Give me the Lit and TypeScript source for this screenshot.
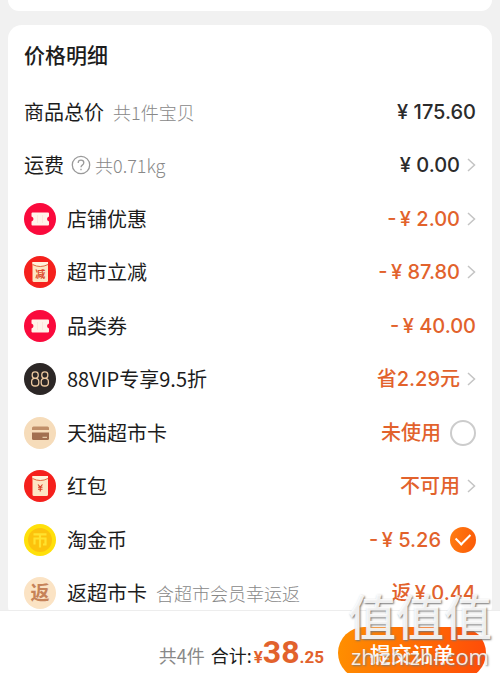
import { LitElement, html, css, svg, nothing } from "lit";
import { customElement, state } from "lit/decorators.js";
import { classMap } from "lit/directives/class-map.js";

interface Row {
  id: string;
  label: string;
  note?: string;
  help?: boolean;
  icon?: string;
  amount: string;
  dark?: boolean;
  action?: "link" | "check";
}

const rows: Row[] = [
  { id: "goods", label: "商品总价", note: "共1件宝贝", amount: "¥ 175.60", dark: true },
  { id: "freight", label: "运费", note: "共0.71kg", help: true, amount: "¥ 0.00", dark: true, action: "link" },
  { id: "shop", label: "店铺优惠", icon: "ticket", amount: "-\u2009¥ 2.00", action: "link" },
  { id: "market", label: "超市立减", icon: "reduce", amount: "-\u2009¥ 87.80", action: "link" },
  { id: "category", label: "品类券", icon: "ticket", amount: "-\u2009¥ 40.00" },
  { id: "vip", label: "88VIP专享9.5折", icon: "vip", amount: "省2.29元", action: "link" },
  { id: "card", label: "天猫超市卡", icon: "card", amount: "未使用", action: "check" },
  { id: "packet", label: "红包", icon: "packet", amount: "不可用", action: "link" },
  { id: "coin", label: "淘金币", icon: "coin", amount: "-\u2009¥ 5.26", action: "check" },
  { id: "back", label: "返超市卡", note: "含超市会员幸运返", icon: "back", amount: "返\u2009¥ 0.44" },
];

const pouch = svg`
  <path d="M8.500 6h15.500v18.500q0 1.500-1.500 1.500h-12.500q-1.500 0-1.500-1.500z" fill="#fde6c4"/>
  <path d="M8.500 6h15.500v2.500q-7.750 4-15.500 0z" fill="#fff3dc"/>
  <path d="M8.500 8.500q7.750 4 15.500 0" fill="none" stroke="#e0653c" stroke-width="1"/>`;

const icons: Record<string, unknown> = {
  ticket: svg`
    <circle cx="16" cy="16" r="16" fill="#fa0a3c"/>
    <path d="M8.500 9.500h15.500q1 0 1 1v3q-2 .6-2 2.500t2 2.500v3q0 1-1 1h-15.500q-1 0-1-1v-3q2-.6 2-2.500t-2-2.500v-3q0-1 1-1z" fill="#fff3ea"/>
    <path d="M13.500 12v8M18.500 12v8" stroke="#fde5dc" stroke-width="1"/>`,
  reduce: svg`
    <circle cx="16" cy="16" r="16" fill="#f5201c"/>${pouch}
    <text x="16.250" y="21.500" text-anchor="middle" class="glyph" font-size="10" fill="#dc4a2c">减</text>`,
  vip: svg`
    <circle cx="16" cy="16" r="16" fill="#2c2726"/>
    <g fill="none" stroke="#ecc9a0" stroke-width="1.300">
      <rect x="8.200" y="8.800" width="6" height="6.600" rx="2.800"/><rect x="7.600" y="15.400" width="7.200" height="7.600" rx="3.300"/>
      <rect x="17.800" y="8.800" width="6" height="6.600" rx="2.800"/><rect x="17.200" y="15.400" width="7.200" height="7.600" rx="3.300"/>
    </g>`,
  card: svg`
    <circle cx="16" cy="16" r="16" fill="#f6dcba"/>
    <path d="M8 11q0-1.500 1.500-1.500h14q1.500 0 1.500 1.500v2h-17z" fill="#c08e68"/>
    <path d="M8 15.500h17v6q0 1.500-1.500 1.500h-14q-1.500 0-1.500-1.500z" fill="#a26f50"/>
    <path d="M18.500 20.300h4.500" stroke="#f6dcba" stroke-width="1"/>`,
  packet: svg`
    <circle cx="16" cy="16" r="16" fill="#f5201c"/>${pouch}
    <path d="M14 14.500l2.250 2.700 2.250-2.700M16.250 17v4.500M14 17.300h4.500M14 19.300h4.500" fill="none" stroke="#d8432a" stroke-width="1.100"/>`,
  coin: svg`
    <circle cx="16" cy="16" r="16" fill="#ffe00a"/>
    <circle cx="16" cy="16" r="12" fill="#fcc20c"/>
    <path d="M9.500 10.300h13M16 10v13.500M10.500 20.500v-6h11v6h-2.500" fill="none" stroke="#ffe22e" stroke-width="2.200"/>`,
  back: svg`
    <circle cx="16" cy="16" r="16" fill="#fbe3c4"/>
    <text x="16" y="23" text-anchor="middle" class="glyph" font-size="19" fill="#c68258">返</text>`,
};

@customElement("app-root")
export class AppRoot extends LitElement {
  @state() private checked = new Set<string>(["coin"]);

  static styles = css`
    :host {
      display: flex;
      flex-direction: column;
      height: 100vh;
      position: relative;
      overflow: hidden;
      background: #f1f1f1;
      color: #1c1c1c;
      font-family: "Noto Sans CJK SC", sans-serif;
      font-size: 20px;
      line-height: 28px;
    }
    * { box-sizing: border-box; }
    button {
      margin: 0;
      padding: 0;
      border: 0;
      background: none;
      color: inherit;
      font: inherit;
      cursor: pointer;
    }
    main {
      flex: 1;
      min-height: 0;
      overflow-y: auto;
      scrollbar-width: none;
      padding: 0 8px;
    }
    .previous {
      height: 11px;
      background: #fff;
      border-radius: 0 0 14px 14px;
    }
    .card {
      margin-top: 14px;
      padding: 15px 16px 0;
      background: #fff;
      border-radius: 14px;
    }
    h1 {
      margin: 0 0 17px;
      font-size: 21px;
      line-height: 28px;
      font-weight: 500;
    }
    ul { margin: 0; padding: 0; list-style: none; }
    .row {
      display: flex;
      align-items: center;
      height: 53px;
      white-space: nowrap;
    }
    .row:nth-child(even) { height: 54px; }
    .icon { flex: none; width: 32px; height: 32px; margin-right: 11px; }
    .glyph { font-family: "Noto Sans CJK SC", sans-serif; font-weight: 700; }
    .note {
      margin-left: 9px;
      color: #888;
      font-size: 18px;
      font-weight: 300;
    }
    .help { margin-left: 7px; height: 20px; display: flex; }
    .help + .note { margin-left: 4px; }
    .amount {
      margin-left: auto;
      color: #e2622c;
      font-family: Inter, "Noto Sans CJK SC", sans-serif;
      font-weight: 500;
    }
    .dark { color: #2b2b2b; }
    .more { display: flex; margin-left: 7px; }
    .line { fill: none; stroke: #c4c4c4; stroke-width: 1.5; }
    .tick {
      appearance: none;
      flex: none;
      display: grid;
      place-items: center;
      width: 26px;
      height: 26px;
      margin: 0 0 0 9px;
      border: 2px solid #ccc;
      border-radius: 50%;
    }
    .tick:checked {
      border: 0;
      background: linear-gradient(100deg, #ff7d12, #fb5a08);
    }
    .tick:checked::after {
      content: "";
      width: 12px;
      height: 7px;
      margin-bottom: 4px;
      border: solid #fff;
      border-width: 0 0 2px 2px;
      rotate: -45deg;
    }
    footer {
      flex: none;
      display: flex;
      align-items: flex-start;
      justify-content: flex-end;
      height: 63px;
      padding: 16px 14px 0 0;
      background: #fff;
      border-top: 1px solid #ededed;
      white-space: nowrap;
    }
    .summary {
      display: flex;
      align-items: baseline;
      margin: 8px 14px 0 0;
      font-size: 18px;
      line-height: 40px;
    }
    .count { margin-right: 6px; color: #888; }
    .total {
      margin-left: 2px;
      color: #e2622c;
      font-family: Roboto, sans-serif;
      font-size: 17px;
      font-weight: 700;
      line-height: 32px;
    }
    .big { font-size: 32px; }
    .submit {
      width: 148px;
      height: 52px;
      border-radius: 26px;
      background: linear-gradient(100deg, #ff9000, #ff4a08);
      color: #fff;
      font-size: 21px;
      font-weight: 500;
    }
    .mark {
      position: absolute;
      right: 8px;
      bottom: 4px;
      display: flex;
      flex-direction: column;
      align-items: center;
      color: #ffffffe0;
      text-shadow: 1px 1px 2px #777;
      pointer-events: none;
    }
    .mark-name { font-size: 48px; line-height: 58px; font-weight: 500; }
    .mark-site { font-family: "Open Sans", sans-serif; font-size: 22px; line-height: 26px; }
  `;

  private toggle(id: string) {
    const next = new Set(this.checked);
    next.has(id) ? next.delete(id) : next.add(id);
    this.checked = next;
  }

  private renderAction(row: Row) {
    if (row.action === "link") {
      return html`<button class="more" aria-label=${row.label}>
        <svg width="9" height="16" viewBox="0 0 9 16"><path class="line" d="M1 2l6.500 6-6.500 6" /></svg>
      </button>`;
    }
    if (row.action === "check") {
      return html`<input class="tick" type="checkbox" id=${row.id}
        .checked=${this.checked.has(row.id)} @change=${() => this.toggle(row.id)} />`;
    }
    return nothing;
  }

  private renderRow(row: Row) {
    return html`<li class="row">
      ${row.icon ? html`<svg class="icon" viewBox="0 0 32 32" aria-hidden="true">${icons[row.icon]}</svg>` : nothing}
      ${row.action === "check" ? html`<label for=${row.id}>${row.label}</label>` : html`<span>${row.label}</span>`}
      ${row.help
        ? html`<button class="help" aria-label="运费说明">
            <svg width="20" height="20" viewBox="0 0 20 20" fill="none" stroke="#999" stroke-width="1.300">
              <circle cx="10" cy="10" r="8.700" />
              <path d="M7.200 8q0-2.800 2.800-2.800t2.800 2.600q0 1.400-1.500 2.300-1.300.8-1.300 2.200M10 13.700v1.500" />
            </svg>
          </button>`
        : nothing}
      ${row.note ? html`<span class="note">${row.note}</span>` : nothing}
      <span class=${classMap({ amount: true, dark: !!row.dark })}>${row.amount}</span>
      ${this.renderAction(row)}
    </li>`;
  }

  render() {
    return html`
      <main>
        <div class="previous"></div>
        <section class="card">
          <h1>价格明细</h1>
          <ul>${rows.map((row) => this.renderRow(row))}</ul>
        </section>
      </main>
      <footer>
        <div class="summary">
          <span class="count">共4件</span>
          <span>合计:</span>
          <span class="total">¥<span class="big">38</span>.25</span>
        </div>
        <button class="submit">提交订单</button>
      </footer>
      <div class="mark">
        <span class="mark-name">值值值</span>
        <span class="mark-site">zhizhizhi.com</span>
      </div>
    `;
  }
}
